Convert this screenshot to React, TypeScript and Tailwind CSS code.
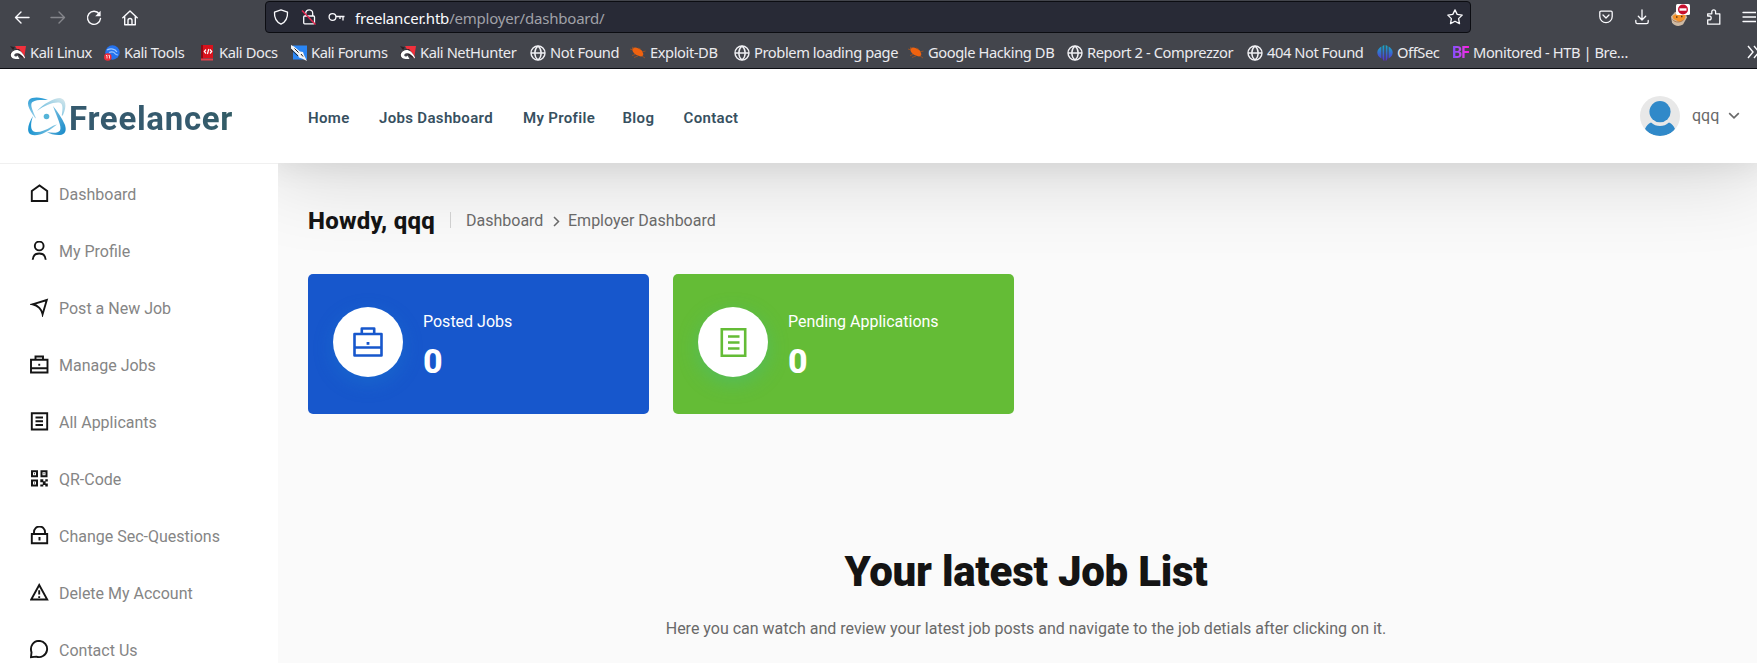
import React from "react";

type Mark = { x: number; label: string; icon: React.ReactNode };

const Globe = () => (
  <svg width="16" height="16" viewBox="0 0 16 16" fill="none" stroke="#f0f0f4" strokeWidth="1.4">
    <circle cx="8" cy="8" r="7" />
    <path d="M8 1C5.600 3 4.800 5.500 4.800 8S5.600 13 8 15M8 1c2.400 2 3.200 4.500 3.200 7S10.400 13 8 15M1 8h14" />
  </svg>
);

const KaliLinux = () => (
  <svg width="16" height="16" viewBox="0 0 16 16">
    <path d="M5 1h11l-2 12.500L8 6z" fill="#f2303c" />
    <path d="M0 1l5 1.500L3 5zM0 8l3-2v7H1z" fill="#2c2226" />
    <path d="M3 5l6-1 4 5 1 4-3-1z" fill="#2c2226" />
    <path d="M5.500 14C0 13.500-.5 8.500 3 6.200c4-2.600 9-.5 12 6.300l-.5 1C12 10 9.500 8 6.500 8.300c-2.500.3-3 2.700-1 3.200 1 .2 1.800-.3 2-1l2 3.500z" fill="#fff" />
  </svg>
);

const KaliTools = () => (
  <svg width="16" height="16" viewBox="0 0 16 16">
    <circle cx="8.500" cy="7.500" r="7.200" fill="#2472ee" />
    <path d="M3 5c4-2 8-1 10 2M5 7.500c3-1 5-.5 6 1s2 1.500 3 1.500" fill="none" stroke="#9fc8ff" strokeWidth="1.200" />
    <circle cx="3.800" cy="12" r="3.800" fill="#ee2c38" />
    <path d="M2 10.500h1v3M4.500 10.500h1v3" fill="none" stroke="#fff" strokeWidth=".8" />
  </svg>
);

const KaliDocs = () => (
  <svg width="16" height="16" viewBox="0 0 16 16">
    <rect x="2" y="0" width="12" height="13" fill="#d9121c" />
    <rect x="2" y="0" width="2" height="15" fill="#8f0a14" />
    <rect x="2" y="13.500" width="12" height="2" fill="#e8404a" />
    <path d="M7 4.500L5.300 6.500 7 8.500M11 4.500l1.700 2-1.700 2M9.800 4L8.400 9" fill="none" stroke="#fff" strokeWidth="1.200" />
  </svg>
);

const KaliForums = () => (
  <svg width="16" height="16" viewBox="0 0 16 16">
    <path d="M2 .5h14v14H2z" fill="#2a86f5" />
    <path d="M0 0l3 1.500 6 5 3 .5 1 3 3 6-5-2.500-3-1-1-2.500-7-6.500z" fill="#f4f4f4" />
    <path d="M0 4.500l7 6.500M3.500 3.500l4 4M10 9l2 2.500" stroke="#222" strokeWidth="1" fill="none" />
  </svg>
);

const Exploit = () => (
  <svg width="16" height="16" viewBox="0 0 16 16">
    <path d="M2.500 3.300c2-1.300 4-.8 6 .2 1.500.5 3.200 1.500 4 3 .5 1.500 1.500 3 0 4.500-1.200.8-2.500.2-4-.3-2-.3-4-1.600-5.200-3.400C2.500 6 2 4.500 2.500 3.300z" fill="#f0620f" />
    <path d="M0 4l3 1M8 3l3 1.500M12 7l3.500-1M5 9.500l-3 1M8 11l-4 1.500M12 11l3 2M2 2l2 1.500" stroke="#a4531f" strokeWidth=".8" fill="none" />
  </svg>
);

const OffSec = () => (
  <svg width="16" height="16" viewBox="0 0 16 16">
    <defs>
      <linearGradient id="os" x1="0" y1="0" x2="0" y2="1">
        <stop offset="0" stopColor="#12b0c8" />
        <stop offset="1" stopColor="#5a28d8" />
      </linearGradient>
    </defs>
    <path d="M7.300 0v16C6.300 15.500 5.500 14 5.500 12V1zM8.700 0v16c1-.5 1.800-2 1.800-4V1zM4.400 1.500v12C1.800 12 .3 10 .3 7.500S1.800 3 4.400 1.500zM11.600 1.500v12c2.600-1.500 4.100-3.500 4.100-6S14.200 3 11.600 1.500z" fill="url(#os)" />
  </svg>
);

const BreachMark = () => (
  <span className="w-[17px] bg-gradient-to-r from-[#7a4dff] to-[#ff00e0] bg-clip-text font-['Roboto',sans-serif] text-base leading-4 font-bold tracking-[-1px] text-transparent">BF</span>
);

const marks: Mark[] = [
  { x: 10, label: "Kali Linux", icon: <KaliLinux /> },
  { x: 104, label: "Kali Tools", icon: <KaliTools /> },
  { x: 199, label: "Kali Docs", icon: <KaliDocs /> },
  { x: 291, label: "Kali Forums", icon: <KaliForums /> },
  { x: 400, label: "Kali NetHunter", icon: <KaliLinux /> },
  { x: 530, label: "Not Found", icon: <Globe /> },
  { x: 630, label: "Exploit-DB", icon: <Exploit /> },
  { x: 734, label: "Problem loading page", icon: <Globe /> },
  { x: 908, label: "Google Hacking DB", icon: <Exploit /> },
  { x: 1067, label: "Report 2 - Comprezzor", icon: <Globe /> },
  { x: 1247, label: "404 Not Found", icon: <Globe /> },
  { x: 1377, label: "OffSec", icon: <OffSec /> },
  { x: 1452, label: "Monitored - HTB | Bre…", icon: <BreachMark /> },
];

function BrowserChrome() {
  return (
    <div className="flex h-[69px] flex-col border-b border-[#0c0d12] bg-[#43454c] font-['Noto_Sans',sans-serif] text-[#ebebef]">
      <div className="flex h-[34px] items-center">
        <svg className="ml-[14px] shrink-0" width="16" height="16" viewBox="0 0 16 16" fill="none" stroke="#fbfbfe" strokeWidth="1.400" strokeLinecap="round" strokeLinejoin="round">
          <path d="M15 8.500H1.500M7 3L1.500 8.500 7 14" />
        </svg>
        <svg className="ml-5 shrink-0" width="16" height="16" viewBox="0 0 16 16" fill="none" stroke="#85868c" strokeWidth="1.400" strokeLinecap="round" strokeLinejoin="round">
          <path d="M1 8.500h13.500M9 3l5.500 5.500L9 14" />
        </svg>
        <svg className="ml-5 shrink-0" width="16" height="17" viewBox="0 0 16 17" fill="none" stroke="#fbfbfe" strokeWidth="1.400" strokeLinecap="round">
          <path d="M13.300 5A6.500 6.500 0 1 0 14.500 9.500" />
          <path d="M14.600 1.800v5.400H9.200z" fill="#fbfbfe" stroke="none" />
        </svg>
        <svg className="ml-5 shrink-0" width="16" height="17" viewBox="0 0 16 17" fill="none" stroke="#fbfbfe" strokeWidth="1.400" strokeLinecap="round" strokeLinejoin="round">
          <path d="M.8 8.800L8 2l7.200 6.800M2.700 7.500v8.300h10.600V7.500M6 15.500v-4a2 2 0 0 1 4 0v4" />
        </svg>
        <div className="ml-[127px] flex h-8 w-[1206px] shrink-0 items-center rounded-[4px] border border-[#0c0d12] bg-[#282a36]">
          <svg className="ml-[7px] shrink-0" width="16" height="16" viewBox="0 0 16 16" fill="none" stroke="#fbfbfe" strokeWidth="1.300" strokeLinejoin="round">
            <path d="M8 .8l6.500 2.400c.3 5-1.500 9.500-6.500 12C3 12.700 1.200 8.200 1.500 3.200z" />
          </svg>
          <svg className="ml-[12px] shrink-0" width="16" height="16" viewBox="0 0 16 16" fill="none" stroke="#fbfbfe" strokeWidth="1.300">
            <path d="M4.700 7V4.300a3.500 3.500 0 0 1 7 0V7" />
            <rect x="2.700" y="7" width="10.800" height="7.800" rx="1" />
            <path d="M1 1.500l13.500 14" stroke="#e22850" strokeWidth="1.500" />
          </svg>
          <svg className="ml-[11px] shrink-0" width="17" height="16" viewBox="0 0 17 16" fill="none" stroke="#fbfbfe" strokeWidth="1.300">
            <circle cx="4.500" cy="8" r="3.400" />
            <path d="M8 7.500h8.500M12 7.500v2.500M15 7.500v4" />
          </svg>
          <div className="ml-[10px] grow pt-px text-[15px] leading-5 tracking-[-0.200px] whitespace-nowrap">
            <span className="text-[#fbfbfe]">freelancer.htb</span>
            <span className="text-[#a0a1a8]">/employer/dashboard/</span>
          </div>
          <svg className="mr-[7px] shrink-0" width="16" height="16" viewBox="0 0 16 16" fill="none" stroke="#fbfbfe" strokeWidth="1.300" strokeLinejoin="round">
            <path d="M8 .9l2.200 4.500 5 .7-3.600 3.500.9 5L8 12.200l-4.500 2.400.9-5L.8 6.100l5-.7z" />
          </svg>
        </div>
        <svg className="ml-[128px] shrink-0" width="14" height="14" viewBox="0 0 14 14" fill="none" stroke="#fbfbfe" strokeWidth="1.300" strokeLinecap="round" strokeLinejoin="round">
          <path d="M2 1.200h10q1.200 0 1.200 1.200V6.500a6.200 6.200 0 0 1-12.400 0V2.400Q.8 1.200 2 1.200zM4 5l3 3 3-3" />
        </svg>
        <svg className="ml-[22px] shrink-0" width="14" height="16" viewBox="0 0 14 16" fill="none" stroke="#fbfbfe" strokeWidth="1.300" strokeLinecap="round" strokeLinejoin="round">
          <path d="M7 .8v10M3.300 7.300L7 11l3.700-3.700M.8 11.500V13q0 1.700 1.700 1.700h9q1.700 0 1.700-1.700v-1.500" />
        </svg>
        <svg className="-mt-1 ml-[21px] shrink-0" width="20" height="22" viewBox="0 0 20 22">
          <path d="M1 12.500l4-4.500 10-1 2 6.500-4 7c-4 2.500-9 1.500-11-2z" fill="#cdb9a4" />
          <path d="M2.500 12L8 9l8 1-1.500 5.500-5 2.500-6-3z" fill="#f5922a" />
          <path d="M2.500 15.500c3 3.500 8 3 11 .5" fill="none" stroke="#a56a3c" strokeWidth=".8" />
          <path d="M6 13h1.500M11 12.500h1.500" stroke="#5e3310" strokeWidth="1.300" />
          <rect x="6" y="0" width="14" height="11" rx="1.500" fill="#fff" />
          <circle cx="13" cy="5.500" r="5" fill="#c80f2e" />
          <rect x="9.500" y="4.300" width="7" height="2.400" fill="#fff" />
        </svg>
        <svg className="ml-[16px] shrink-0" width="15" height="16" viewBox="0 0 15 16" fill="none" stroke="#fbfbfe" strokeWidth="1.300" strokeLinejoin="round">
          <path d="M1.700 15.200v-4.400h1.600a1.900 1.900 0 0 0 0-3.800H1.700V4.800h4.100V2.700a1.900 1.900 0 0 1 3.800 0v2.100h4.200v10.400z" />
        </svg>
        <svg className="ml-[21px] shrink-0" width="14" height="14" viewBox="0 0 14 14" fill="none" stroke="#fbfbfe" strokeWidth="1.300" strokeLinecap="round">
          <path d="M1 2.500h13M1 7h13M1 11.500h13" />
        </svg>
      </div>
      <div className="flex h-[34px] items-center overflow-hidden pt-[3px] pl-[10px]">
        {marks.map((m, i) => (
          <div key={i} className="flex shrink-0 items-center gap-1 text-[14.700px] leading-5 tracking-[-0.420px] whitespace-nowrap" style={{ width: (i + 1 < marks.length ? marks[i + 1].x : 1747) - m.x }}>
            {m.icon}
            <span className="-mt-[2px]">{m.label}</span>
          </div>
        ))}
        <svg className="-mt-px shrink-0" width="14" height="14" viewBox="0 0 14 14" fill="none" stroke="#fbfbfe" strokeWidth="1.400">
          <path d="M1 1l5 6-5 6M7 1l5 6-5 6" />
        </svg>
      </div>
    </div>
  );
}

const nav = [
  { label: "Home", w: "w-[71px]" },
  { label: "Jobs Dashboard", w: "w-[144px]" },
  { label: "My Profile", w: "w-[99.500px]" },
  { label: "Blog", w: "w-[61px]" },
  { label: "Contact", w: "w-[60px]" },
];

function Header() {
  return (
    <header className="flex h-[94px] shrink-0 items-center bg-white">
      <svg className="mt-[2px] ml-[27px] shrink-0" width="40" height="40" viewBox="0 0 40 40">
        <defs>
          <linearGradient id="la" x1="0" y1="1" x2="1" y2="0">
            <stop offset="0" stopColor="#4fb2dd" />
            <stop offset="1" stopColor="#dbe9ec" />
          </linearGradient>
          <linearGradient id="lb" x1="0" y1="0" x2="1" y2="1">
            <stop offset="0" stopColor="#8dcbe6" />
            <stop offset="1" stopColor="#1488c8" />
          </linearGradient>
          <linearGradient id="lc" x1="0" y1="0" x2="0" y2="1">
            <stop offset="0" stopColor="#2c9dd6" />
            <stop offset="1" stopColor="#9ed3ea" />
          </linearGradient>
          <linearGradient id="ld" x1="0" y1="0" x2="1" y2="0">
            <stop offset="0" stopColor="#1a93d0" />
            <stop offset="1" stopColor="#8ccae4" />
          </linearGradient>
        </defs>
        <path d="M10 14C16 7 27 1 33 1c6 1 7 8 3 17-.5 1-1.500 1-1.200 0C36 11 36 6 32 5.500 26 5 18 8 10 14z" fill="url(#la)" />
        <path d="M26 9c4 5 9 12 12 19 1.800 6 0 9.500-5 10-5 .3-10-1-13-3 5 1 11 1.500 13-1.500 2-4-3-13-7-24.500z" fill="url(#lb)" />
        <path d="M21 3C14 0 5-.5 2 3-.5 7 2 12 6 18c1 1.500 2 3 3 3.500C7 16 2 8 5.500 5 9 2.500 15 3 21 3z" fill="url(#lc)" />
        <path d="M6 19C1 27-1 35 4 37.500c6 3 18-3 26-10-1 0-4 1-6 2.500-6 4-15 6.500-18 4-3-3-2-9 0-15z" fill="url(#ld)" />
        <circle cx="19.500" cy="19.500" r="2.800" fill="#55b4d8" />
      </svg>
      <div className="ml-[2px] w-[239px] shrink-0 bg-gradient-to-r from-[#355a6e] from-50% to-[#2f6258] bg-clip-text pt-[6px] font-['Roboto',sans-serif] text-[33px] leading-10 font-bold tracking-[0.700px] text-transparent">Freelancer</div>
      <nav className="flex grow pt-[3px] font-['Roboto',sans-serif] text-[15px] leading-5 font-semibold whitespace-nowrap text-[#37505f]">
        {nav.map((n) => (
          <a key={n.label} className={`${n.w} shrink-0 tracking-[0.330px]`}>{n.label}</a>
        ))}
      </nav>
      <svg className="shrink-0" width="40" height="40" viewBox="0 0 40 40">
        <defs>
          <clipPath id="av"><circle cx="20" cy="20" r="20" /></clipPath>
        </defs>
        <g clipPath="url(#av)">
          <rect width="40" height="40" fill="#e8e8e8" />
          <circle cx="20" cy="15.700" r="10.600" fill="#3089c9" />
          <path d="M5 33q2-5 6-6.500 4 3.500 9 3.500t9-3.500q4 1.500 6 6.500-5 7-15 7T5 33z" fill="#3089c9" />
        </g>
      </svg>
      <span className="ml-3 w-[27px] font-['Roboto',sans-serif] text-base text-[#696969]">qqq</span>
      <svg className="mr-[17px] ml-[9px] shrink-0" width="12" height="8" viewBox="0 0 12 8" fill="none" stroke="#696969" strokeWidth="1.700">
        <path d="M1.200 1.200L6 5.800l4.800-4.600" />
      </svg>
    </header>
  );
}

const side: { label: string; icon: React.ReactNode }[] = [
  { label: "Dashboard", icon: <path d="M1.800 7L9.500 1.500 17.200 7v10H1.800z" /> },
  { label: "My Profile", icon: <><circle cx="9.200" cy="5" r="4.400" /><path d="M2.700 18.800c.3-4.200 2.900-6.300 6.500-6.300s6.200 2.100 6.500 6.300" /></> },
  { label: "Post a New Job", icon: <path d="M2.500 6.300L16.800 2l-4.200 14.200c-.8-4.500-4.600-8.900-10.100-9.900z" strokeMiterlimit="10" /> },
  { label: "Manage Jobs", icon: <><path d="M1 4.800h16.500v12.700H1zM5.500 4.800V1.500h7.500v3.300M1 13.300h16.500" /><path d="M8.300 8.800h1.900v1.900H8.300z" fill="currentColor" stroke="none" /></> },
  { label: "All Applicants", icon: <path d="M1.800 1.200h15.400v16.300H1.800zM5.500 5.500h7.500M5.500 9.300h7.500M5.500 13h7.500" /> },
  { label: "QR-Code", icon: <><path d="M2 2.300h5v5H2zM11.500 2.300h5v5h-5zM2 11.500h5v5H2z" strokeWidth="2" /><path d="M4 4.300h1v1H4zM13.500 4.300h1v1h-1zM4 13.500h1v1H4zM10.300 10.300h3v2h2v-2h2.500v2.300h-2.200v2h2.200v3h-2.500v-1.500h-2v1.500h-3v-2.200h2.500v-2.200h-2.500z" fill="currentColor" stroke="none" /></> },
  { label: "Change Sec-Questions", icon: <><path d="M1.800 8h15.400v9.200H1.800zM4 8V6a5.500 5.500 0 0 1 11 0v2" /><path d="M9.500 11v3.500" strokeWidth="2" /></> },
  { label: "Delete My Account", icon: <path d="M9.200 2l8 14.500H1.200zM9.200 7.200v4.400M9.200 13.200V15" /> },
  { label: "Contact Us", icon: <path d="M1 17.200l.5-4.800C-.5 6 3.500.9 9.200.9a8.100 8.100 0 1 1-3 15.700z" /> },
];

function Sidebar() {
  return (
    <aside className="flex w-[278px] shrink-0 flex-col border-t border-[#f0f0f0] bg-white pt-[2px]">
      {side.map((s) => (
        <a key={s.label} className="flex h-[57px] shrink-0 items-center pl-[30px] font-['Roboto',sans-serif] text-base text-[#858585]">
          <svg className="-mt-[2px] shrink-0 text-[#141414]" width="20" height="19" viewBox="0 0 20 19" fill="none" stroke="currentColor" strokeWidth="1.900">
            {s.icon}
          </svg>
          <span className="ml-[9px] whitespace-nowrap">{s.label}</span>
        </a>
      ))}
    </aside>
  );
}

function Stat({ color, fg, label, glow, children }: { color: string; fg: string; label: string; glow: string; children: React.ReactNode }) {
  return (
    <div className={`flex h-[140px] w-[341px] items-center rounded-[5px] pl-[25px] ${color}`}>
      <div className={`mt-[-4px] flex size-[70px] shrink-0 items-center justify-center rounded-full bg-white ${fg} ${glow}`}>{children}</div>
      <div className="ml-5 flex flex-col pt-px font-['Roboto',sans-serif] text-white">
        <span className="text-base leading-6">{label}</span>
        <span className="mt-[9px] text-[34px] leading-[36px] font-extrabold">0</span>
      </div>
    </div>
  );
}

export default function App() {
  return (
    <div className="flex h-[663px] w-[1757px] flex-col overflow-hidden bg-[#fafafa]">
      <BrowserChrome />
      <Header />
      <div className="flex min-h-0 grow">
        <Sidebar />
        <main className="relative flex grow flex-col overflow-hidden pl-[30px] font-['Roboto',sans-serif]">
          <div className="absolute -top-[94px] -right-2 -left-2 h-[94px] shadow-[0_0_30px_rgba(0,0,0,0.080),0_10px_85px_rgba(0,0,0,0.160)]" />
          <div className="relative mt-[42px] flex h-8 items-center">
            <h1 className="w-[142px] text-2xl font-extrabold tracking-[0.250px] whitespace-nowrap text-[#141414]">Howdy, qqq</h1>
            <span className="-mt-[3px] h-4 w-px bg-[#cfcfcf]" />
            <span className="ml-[15px] w-[87px] text-base text-[#696969]">Dashboard</span>
            <svg className="mr-[8px]" width="7" height="11" viewBox="0 0 7 11" fill="none" stroke="#696969" strokeWidth="1.500"><path d="M1 1l4.500 4.500L1 10" /></svg>
            <span className="text-base text-[#696969]">Employer Dashboard</span>
          </div>
          <div className="relative mt-[37px] flex gap-6">
            <Stat color="bg-[#1757cc]" fg="text-[#1757cc]" label="Posted Jobs" glow="shadow-[0_6px_20px_rgba(30,140,210,0.300)]">
              <svg width="30" height="30" viewBox="0 0 30 30" fill="none" stroke="currentColor" strokeWidth="2.600">
                <path d="M1.500 7h27v21.500h-27zM8.800 7V1.500h12.400V7M1.500 20.500h27" strokeLinejoin="round" />
                <path d="M13.600 15h2.800v2.800h-2.800z" fill="currentColor" stroke="none" />
              </svg>
            </Stat>
            <Stat color="bg-[#64bc36]" fg="text-[#64bc36]" label="Pending Applications" glow="shadow-[0_6px_20px_rgba(60,190,150,0.400)]">
              <svg width="27" height="29" viewBox="0 0 27 29" fill="none" stroke="currentColor" strokeWidth="2.600">
                <path d="M1.800 1.300h23.400v26.400H1.800zM8 8.500h11.500M8 14.500h11.500M8 20.500h11.500" />
              </svg>
            </Stat>
          </div>
          <div className="relative flex flex-col items-center pt-[133px] pr-[13px] text-center">
            <h2 className="text-[42px] leading-[50px] font-black tracking-[-0.240px] whitespace-nowrap text-[#141414]">Your latest Job List</h2>
            <p className="mt-[20px] text-base leading-6 whitespace-nowrap text-[#696969]">Here you can watch and review your latest job posts and navigate to the job detials after clicking on it.</p>
          </div>
        </main>
      </div>
    </div>
  );
}
